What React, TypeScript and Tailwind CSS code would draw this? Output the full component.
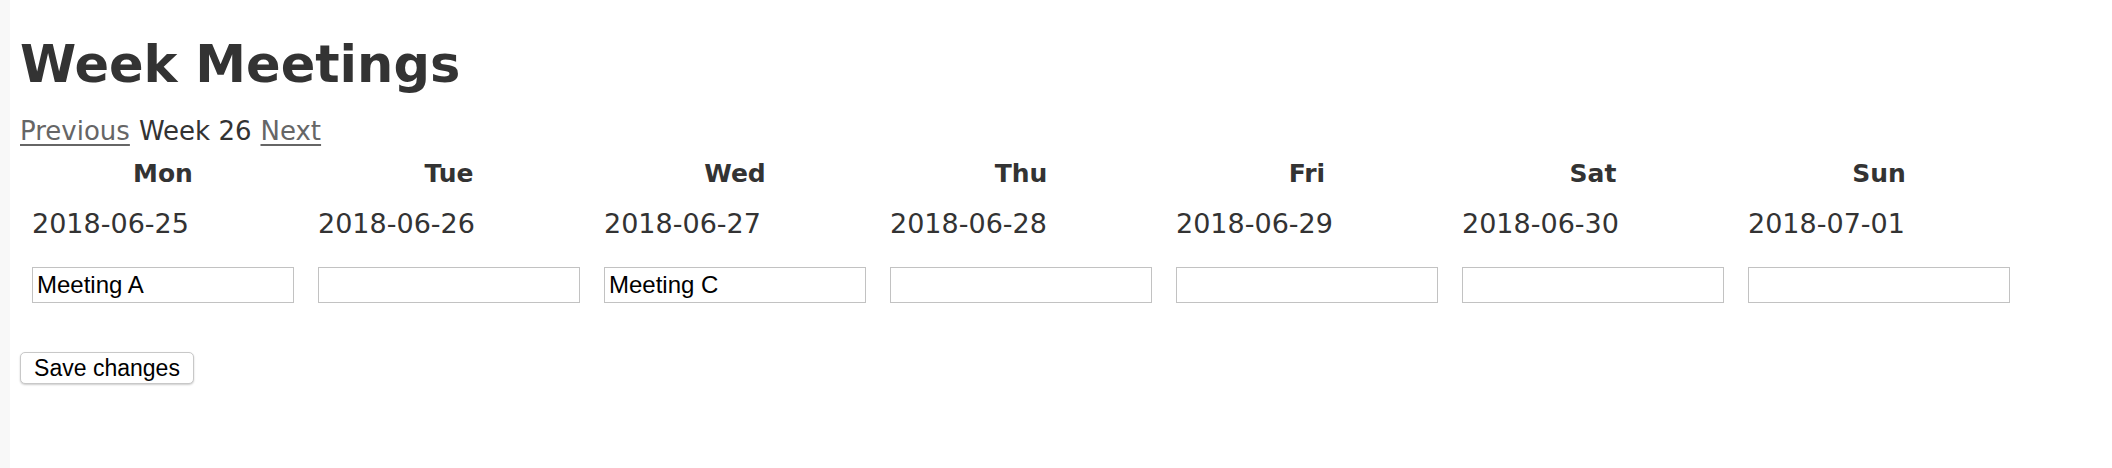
import React from "react";

const days = [
  { name: "Mon", date: "2018-06-25", value: "Meeting A" },
  { name: "Tue", date: "2018-06-26", value: "" },
  { name: "Wed", date: "2018-06-27", value: "Meeting C" },
  { name: "Thu", date: "2018-06-28", value: "" },
  { name: "Fri", date: "2018-06-29", value: "" },
  { name: "Sat", date: "2018-06-30", value: "" },
  { name: "Sun", date: "2018-07-01", value: "" },
];

export default function App() {
  return (
    <div className="flex min-h-[468px] w-[2112px] bg-white text-[#333] font-['DejaVu_Sans',sans-serif]">
      <div className="w-[10px] shrink-0 bg-[#f8f8f8]" />
      <div className="flex flex-col pl-[10px]">
        <h1 className="mt-[39px] h-[51px] text-[51px] leading-[51px] font-bold">Week Meetings</h1>
        <div className="mt-[26px] h-[30px] text-[26px] leading-[30px] flex gap-[9px]">
          <a href="#" className="text-[#666] underline decoration-[2px] underline-offset-[4px]">Previous</a>
          <span>Week 26</span>
          <a href="#" className="text-[#666] underline decoration-[2px] underline-offset-[4px]">Next</a>
        </div>
        <div className="mt-[13px] grid grid-cols-[repeat(7,286px)]">
          {days.map((d) => (
            <div key={d.name} className="flex flex-col px-3">
              <div className="h-[30px] text-center text-[25px] leading-[30px] font-bold">{d.name}</div>
              <div className="mt-[20px] h-[30px] text-[27px] leading-[30px]">{d.date}</div>
              <input
                type="text"
                defaultValue={d.value}
                className="mt-[28px] h-[36px] w-full border border-[#c2c2c2] bg-white px-[4px] text-[24px] text-black font-['Liberation_Sans',Arial,sans-serif] outline-none"
              />
            </div>
          ))}
        </div>
        <div className="mt-[49px]">
          <button className="h-[32px] w-[174px] rounded-[5px] border border-[#c8c8c8] bg-white text-[23px] leading-none text-black shadow-[0_1px_2px_rgba(0,0,0,0.2)] font-['Liberation_Sans',Arial,sans-serif]">
            Save changes
          </button>
        </div>
      </div>
    </div>
  );
}
